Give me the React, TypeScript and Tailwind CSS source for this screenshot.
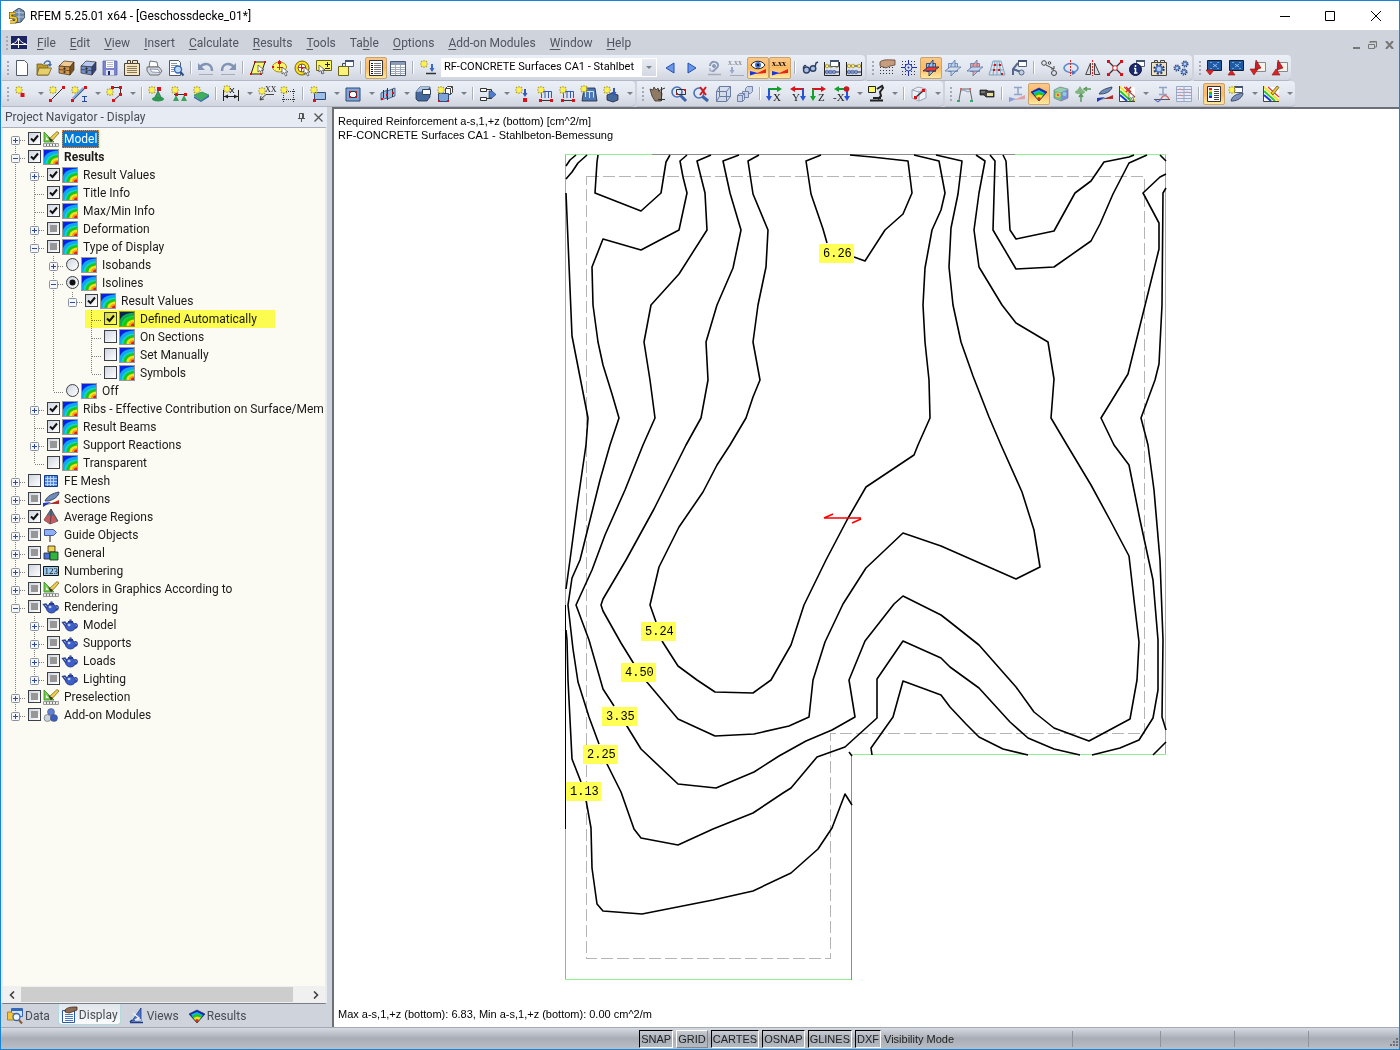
import { useState } from "react";
import type { ReactNode } from "react";
import clsx from "clsx";

/* ---------- small parts shared by the icons ---------- */

const Star = ({ x = 4, y = 4 }: { x?: number; y?: number }) => (
  <g transform={`translate(${x} ${y})`}>
    <path d="M0-4V4M-4 0H4M-3-3 3 3M3-3-3 3" stroke="#b9a514" strokeWidth="1.2" />
    <circle r="2.4" fill="#fff34a" />
  </g>
);

const Dot = ({ x, y, s = 3 }: { x: number; y: number; s?: number }) => (
  <rect x={x - s / 2} y={y - s / 2} width={s} height={s} fill="#dd1018" />
);

const Cursor = ({ x, y }: { x: number; y: number }) => (
  <path transform={`translate(${x} ${y})`} d="M0 0V7L2 5.5 3.5 9 5 8.2 3.5 5H6Z" fill="#fff" stroke="#444" strokeWidth=".7" />
);

const Win = ({ x, y }: { x: number; y: number }) => (
  <g>
    <path d={`M${x + 0.5} ${y + 0.5}h8v6h-8Z`} fill="#fff" stroke="#555f78" />
    <path d={`M${x} ${y + 1}h9`} stroke="#46536f" strokeWidth="2" />
  </g>
);

const Gear = ({ x, y, r, c = "#4a74bd" }: { x: number; y: number; r: number; c?: string }) => (
  <g transform={`translate(${x} ${y})`}>
    <circle r={r} fill="none" stroke="#22386b" strokeWidth={r * 0.7} strokeDasharray={`${r * 0.42} ${r * 0.37}`} />
    <circle r={r * 0.72} fill="#b9cdf0" stroke={c} strokeWidth={r * 0.4} />
  </g>
);

const Axis = ({ v, h, c1, c2, flip }: { v: string; h: string; c1: string; c2: string; flip?: boolean }) => (
  <g>
    {flip ? (
      <g>
        <path d="M15 3H5" stroke={c1} strokeWidth="2" />
        <path d="M6 0v6L1 3Z" fill={c1} />
        <path d="M14 3v8" stroke={c2} strokeWidth="2" />
        <path d="M11 10h6l-3 5Z" fill={c2} />
      </g>
    ) : (
      <g>
        <path d="M1 3h9" stroke={c1} strokeWidth="2" />
        <path d="M10 0v6l5-3Z" fill={c1} />
        <path d="M2 3v8" stroke={c2} strokeWidth="2" />
        <path d="M-1 10h6l-3 5Z" fill={c2} />
      </g>
    )}
    <text x={h} y="15" fontSize="11" fontFamily="Liberation Serif, serif" fill="#222">{v}</text>
  </g>
);

const Rainbow = () => (
  <g>
    <path d="M0 6 8 2l8 4-8 9Z" fill="#1523c8" />
    <path d="M2 6.500 8 4l6 3-6 8Z" fill="#0fb9d8" />
    <path d="M3 8 8 6l5 2-5 7Z" fill="#1ec51e" />
    <path d="M4.500 10 8 8.500l4 1L8 15Z" fill="#f2e11c" />
    <path d="M6 12l2-1 2 1-2 3Z" fill="#e3261b" />
    <path d="M0 6 8 2l8 4-8 9Z" fill="none" stroke="#223" strokeWidth=".6" />
  </g>
);

const Stripes = () => (
  <g>
    <path d="M1 1h15v14H1Z" fill="#fff" />
    <path d="M1 1 16 15" stroke="#f5e31d" strokeWidth="2" />
    <path d="M1 5 12 15" stroke="#27c82a" strokeWidth="2" />
    <path d="M1 9 8 15" stroke="#1b35de" strokeWidth="2" />
    <path d="M5 1 16 11" stroke="#e33" strokeWidth="1.200" />
    <path d="M.500 0V15.500H16" fill="none" stroke="#444" />
  </g>
);

const Blade = () => (
  <path d="M2 10C4 5 10 2 16 1c0 4-5 8-11 9Z" fill="#6f8bb8" stroke="#26334d" strokeWidth=".8" />
);

const RedBlue = () => (
  <g>
    <path d="M0 16v-4l8-1Z" fill="#1b35de" />
    <path d="M7 13 16 9v4Z" fill="#e3261b" />
    <path d="M0 14 16 11" stroke="#444" strokeWidth=".7" />
  </g>
);

const Beads = () => (
  <g>
    <path d="M.500 2v13.500h15V2M0 6h16M0 12h16" fill="none" stroke="#222" />
    <g fill="#fbe868" stroke="#7a6a12" strokeWidth=".5">
      <circle cx="3" cy="6" r="1.800" /><circle cx="7" cy="6" r="1.800" /><circle cx="13" cy="6" r="1.800" />
    </g>
    <g fill="#7a97d8" stroke="#2a3d78" strokeWidth=".5">
      <circle cx="3" cy="12" r="1.800" /><circle cx="6.500" cy="12" r="1.800" /><circle cx="10" cy="12" r="1.800" />
    </g>
  </g>
);

const Planes = ({ a, b, line }: { a: string; b: string; line: string }) => (
  <g stroke={line} strokeWidth=".8">
    <path d="M3.500 3.500h9v8h-9Z" fill={a} />
    <path d="M6 5 10 0v12l-4 4Z" fill={a} fillOpacity=".85" />
    <path d="M0 11 5 7h11l-5 4Z" fill={b} />
  </g>
);

const DotGrid = () => (
  <path d="M1 7.500H16M1 10.500H16M1 13.500H16" stroke="#333" strokeDasharray="1 2" />
);

const Loads = () => (
  <g>
    <path d="M4.500 12V5.500h10V12M8 6v6M11.500 6v6" fill="none" stroke="#3557b8" />
    <path d="M2 14.500h14" stroke="#333" />
    <Dot x={3.5} y={14.5} /><Dot x={14.5} y={14.5} />
  </g>
);

const Drawer = ({ a, b, c }: { a: string; b: string; c: string }) => (
  <g stroke="#3b3020" strokeWidth=".7">
    <path d="M1 6 6 1l10 1-4 5Z" fill={b} />
    <path d="M1 6l11 1v8L1 13Z" fill={a} />
    <path d="M12 7l4-5v8l-4 5Z" fill={c} />
    <path d="M1 9.500l11 1.200" />
    <circle cx="6.500" cy="8.500" r=".8" fill="#222" /><circle cx="6.500" cy="12" r=".8" fill="#222" />
  </g>
);

/* ---------- toolbar icons on a 16 x 16 grid ---------- */

const ICONS: Record<string, ReactNode> = {
  blank: <path d="M2.500 .500h8l3 3v12h-11Z" fill="#fff" stroke="#525b6b" />,
  open: (
    <g>
      <path d="M1 4h5l1 1h5v10H1Z" fill="#b99a33" stroke="#6e5a15" strokeWidth=".8" />
      <path d="M3 8h12.500l-3 7H1Z" fill="#e8cf6d" stroke="#6e5a15" strokeWidth=".8" />
      <path d="M8 4c1-3 4-4 6-2v3" fill="none" stroke="#456ea8" strokeWidth="1.500" />
      <path d="M11.500 4h4.500l-2 3Z" fill="#456ea8" />
    </g>
  ),
  drawer: <Drawer a="#d6964c" b="#f2c990" c="#7d5220" />,
  drawerBlue: <Drawer a="#6f8fd8" b="#b5c8f2" c="#30457f" />,
  save: (
    <g>
      <path d="M1 1h14v14H1Z" fill="#7a83cc" stroke="#5d64a8" strokeWidth=".8" />
      <path d="M4 1h8v7H4Z" fill="#fff" />
      <path d="M5 2.500h6M5 4.500h6M5 6.500h6" stroke="#b3bad8" />
      <path d="M4 10h8v5H4Z" fill="#e1e4f5" />
      <path d="M6 11h2v4H6Z" fill="#222c66" />
    </g>
  ),
  report: (
    <g>
      <path d="M.500 3.500h15v12H.500Z" fill="#f5e4c3" stroke="#494337" />
      <path d="M3.500 .500h3v3h-3ZM8.500 .500h5v3h-5Z" fill="#f5e4c3" stroke="#494337" />
      <path d="M3 6.500h10M3 8.500h10M3 10.500h10M3 12.500h10" stroke="#8c7a55" />
    </g>
  ),
  print: (
    <g strokeWidth=".8" stroke="#555">
      <path d="M3 7 4 1l7 1 1 5Z" fill="#fff" />
      <path d="M1 7l12 0 3 4-3 4H4L1 11Z" fill="#d5d8df" />
      <path d="M4 9l8 .500 2 3-8-.500Z" fill="#fff" stroke="#7788aa" />
    </g>
  ),
  preview: (
    <g>
      <path d="M1.500 .500h9l2 2v13h-11Z" fill="#fff" stroke="#525b6b" />
      <path d="M3 3.500h6M3 5.500h7M3 7.500h4M3 9.500h4M3 11.500h3" stroke="#8a94a8" />
      <circle cx="10" cy="9.500" r="3.500" fill="#bddcfb" stroke="#3a67b5" strokeWidth="1.400" />
      <path d="M12.500 12l3 3.500" stroke="#2b4d90" strokeWidth="2" />
    </g>
  ),
  undo: (
    <g fill="none" stroke="#8294b5">
      <path d="M2 7c4-5 12-4 12 4" strokeWidth="2.500" />
      <path d="M0 3v7h7Z" fill="#8294b5" stroke="none" />
      <path d="M1 14.500h14" stroke="#a7adba" />
    </g>
  ),
  redo: (
    <g fill="none" stroke="#8294b5">
      <path d="M14 7C10 2 2 3 2 11" strokeWidth="2.500" />
      <path d="M16 3v7H9Z" fill="#8294b5" stroke="none" />
      <path d="M1 14.500h14" stroke="#a7adba" />
    </g>
  ),
  selRhomb: (
    <g>
      <path d="M5 2h10L11 14H1Z" fill="#fbf56a" stroke="#222" />
      <Dot x={5} y={2} s={2} /><Dot x={15} y={2} s={2} /><Dot x={1} y={14} s={2} /><Dot x={11} y={14} s={2} />
      <Cursor x={8} y={5} />
    </g>
  ),
  selEllipse: (
    <g>
      <ellipse cx="7.500" cy="7" rx="7" ry="5" fill="#fbf56a" stroke="#a59018" />
      <path d="M7.500 0v10M5 7.500h6" stroke="#d22" />
      <Dot x={7.5} y={2.5} /><Dot x={1} y={7} s={2} />
      <Cursor x={10} y={7} />
    </g>
  ),
  selRing: (
    <g>
      <circle cx="8" cy="8" r="7" fill="#fbe021" stroke="#7a6508" />
      <circle cx="8" cy="8" r="4" fill="#fff" stroke="#7a6508" />
      <path d="M7.500 4v8M4 7.500h8" stroke="#d22" />
      <Dot x={8} y={8} s={2} />
      <Cursor x={10} y={7} />
    </g>
  ),
  selNote: (
    <g>
      <path d="M.500 .500h15v10h-8l-2 3v-3h-5Z" fill="#fbf56a" stroke="#6d661a" />
      <path d="M9 4.500h5M11.500 2v5M9 8.500h5" stroke="#222" />
      <Cursor x={3} y={5} />
    </g>
  ),
  copyWin: (
    <g>
      <path d="M.500 6.500h10v9H.500Z" fill="#fbf07a" stroke="#6d661a" />
      <path d="M4.500 6V3.500h3" fill="none" stroke="#445" />
      <Win x={7} y={0} />
    </g>
  ),
  list: (
    <g>
      <path d="M1.500 .500h13v15h-13Z" fill="#fff" stroke="#333" />
      <path d="M6 3.500h7M6 5.500h7M6 7.500h7M6 9.500h7M6 11.500h7M6 13.500h7" stroke="#777" />
      <path d="M3 3.500h2M3 5.500h2M3 7.500h2M3 9.500h2M3 11.500h2M3 13.500h2" stroke="#111" />
    </g>
  ),
  table: (
    <g>
      <path d="M.500 1.500h15v14H.500Z" fill="#fff" stroke="#4a566e" />
      <path d="M1 3.500h14" stroke="#8a9bb8" strokeWidth="3" />
      <path d="M1 7.500h14M1 9.500h14M1 11.500h14M1 13.500h14M5.500 5v10M10.500 5v10" stroke="#a3acbc" />
    </g>
  ),
  starDown: (
    <g>
      <Star />
      <path d="M12 4v7" stroke="#3d66c8" strokeWidth="2" />
      <path d="M9.500 8h5L12 12Z" fill="#3d66c8" />
      <path d="M6 13.500h10" stroke="#333" strokeWidth="1.500" />
    </g>
  ),
  prev: <path d="M12 3v10L4 8Z" fill="#6b97ec" stroke="#2450a8" />,
  next: <path d="M4 3v10l8-5Z" fill="#6b97ec" stroke="#2450a8" />,
  lamp: (
    <g stroke="#8b99b8" fill="none">
      <path d="M4 6c0-6 9-5 8 0-1 3-4 3-5 6" strokeWidth="2" />
      <circle cx="8" cy="6" r="1.500" fill="#8b99b8" />
      <path d="M2 14.500h13" stroke="#a5abb8" strokeWidth="1.500" />
      <path d="M4 8v3h3" />
    </g>
  ),
  xxxDown: (
    <g>
      <text x="0" y="5" fontSize="8" fontFamily="Liberation Serif, serif" fill="#777">x.xx</text>
      <path d="M4 7v5" stroke="#98a8cc" strokeWidth="2" />
      <path d="M1.500 10h5L4 14Z" fill="#98a8cc" />
      <path d="M2 15.500h14" stroke="#a5abb8" />
    </g>
  ),
  eye: (
    <g>
      <path d="M1 5c3-5 11-5 14 0-3 5-11 5-14 0Z" fill="#fff" stroke="#222" />
      <circle cx="8" cy="5" r="3" fill="#3d6fd0" /><circle cx="8" cy="5" r="1.200" fill="#111" />
      <path d="M5 14 16 9v4Z" fill="#e3261b" />
      <path d="M0 15.500V11l8 2Z" fill="#1b35de" />
    </g>
  ),
  xxx: (
    <g>
      <text x="0" y="6" fontSize="8" fontWeight="bold" fontFamily="Liberation Serif, serif" fill="#111">x.xx</text>
      <path d="M5 14 16 9v4Z" fill="#e3261b" />
      <path d="M0 15.500V11l8 2Z" fill="#1b35de" />
    </g>
  ),
  glasses: (
    <g fill="#a9bfe6" stroke="#2e4065" strokeWidth="1.400">
      <circle cx="4.500" cy="10" r="3" /><circle cx="11" cy="8.500" r="2.800" />
      <path d="M1.500 9C1 6 3 5 4 6M13 7l1-4 2-1" fill="none" />
    </g>
  ),
  abacusWin: <g><Beads /><Win x={6} y={0} /></g>,
  abacus: <Beads />,
  handGrid: (
    <g>
      <DotGrid />
      <path d="M1 2C4-1 10 0 16 0v5l-5 1-4 2-6-2Z" fill="#c69c7e" stroke="#5d4030" strokeWidth=".8" />
    </g>
  ),
  snapGrid: (
    <g>
      <path d="M1 1.500H16M1 4.500H16M1 11.500H16M1 14.500H16" stroke="#333" strokeDasharray="1 2" />
      <path d="M7.500 0v16M0 7.500h16" stroke="#1d2fa8" />
      <circle cx="7.500" cy="7.500" r="3.500" fill="#dfe6f6" stroke="#1d2fa8" />
      <circle cx="7.500" cy="7.500" r="1" fill="#1d2fa8" />
    </g>
  ),
  planes: <Planes a="#8ec4f5" b="#ee3a2e" line="#16305c" />,
  planesBlue: <Planes a="#bcd3ee" b="#d9dfea" line="#5c7aa8" />,
  planesRed: <Planes a="#f09a98" b="#c4d4ec" line="#5c7aa8" />,
  gridRed: (
    <g>
      <path d="M4 1h8l4 14H0ZM3 5h10M2 10h12M8 1v14M6 1 4 15M10 1l2 14" fill="none" stroke="#7fa5c0" />
      <Dot x={6} y={5} s={2} /><Dot x={11} y={5} s={2} /><Dot x={5} y={10} s={2} /><Dot x={10} y={10} s={2} /><Dot x={13} y={14} s={2} />
    </g>
  ),
  robot: (
    <g>
      <path d="M2 15V9l5-6M2 9l8 3" fill="none" stroke="#54658c" strokeWidth="2" />
      <circle cx="10.500" cy="12.500" r="2.500" fill="#c2cde2" stroke="#54658c" />
      <Win x={7} y={0} />
    </g>
  ),
  moveCopy: (
    <g fill="none" stroke="#444">
      <circle cx="3" cy="3" r="2.300" /><circle cx="8.500" cy="3" r="1.300" /><circle cx="13" cy="13" r="2.500" />
      <path d="M5 5l8 4M13 9V6M13 9h-3" />
    </g>
  ),
  rotate: (
    <g>
      <ellipse cx="8" cy="8" rx="7" ry="4.500" fill="none" stroke="#5b8ad0" strokeWidth="1.600" />
      <path d="M7.500 0v16" stroke="#d22" strokeDasharray="2 1" />
      <path d="M9 10v5l4-2Z" fill="#4a78c4" />
    </g>
  ),
  mirror: (
    <g fill="#d7dbe2" stroke="#444">
      <path d="M5.500 3v11.500H.700Z" /><path d="M9.500 3v11.500h5.300Z" />
      <path d="M7.500 0v16" stroke="#d22" strokeDasharray="2 1" />
    </g>
  ),
  explode: (
    <g>
      <path d="M1 1l14 14M15 1 1 15" stroke="#333" strokeWidth="1.400" />
      <circle cx="8" cy="8" r="2.300" fill="#fff" stroke="#d22" />
      <Dot x={1.5} y={1.5} /><Dot x={14.5} y={1.5} /><Dot x={1.5} y={14.5} /><Dot x={14.5} y={14.5} />
    </g>
  ),
  info: (
    <g>
      <Win x={7} y={0} />
      <circle cx="6.500" cy="9.500" r="6" fill="#1a2a6e" stroke="#0c1540" />
      <path d="M6.500 5v2M6.500 8v5M5 13h3.500M5 8.500h1.500" stroke="#fff" strokeWidth="1.500" />
    </g>
  ),
  calGear: (
    <g>
      <path d="M.500 2.500h15v13H.500Z" fill="#f0e2c4" stroke="#444" />
      <path d="M3.500 .500h3v2h-3ZM9.500 .500h4v2h-4Z" fill="#f0e2c4" stroke="#444" />
      <Gear x={8} y={9} r={4.2} />
    </g>
  ),
  gears: <g><Gear x={4} y={8} r={2.6} /><Gear x={12} y={4} r={2.6} /><Gear x={11} y={12} r={2.6} /></g>,
  screenDown: (
    <g>
      <path d="M1.500 .500h14v10h-14Z" fill="#2159a3" stroke="#123" />
      <path d="M7 4l4 3M11 4 7 7" stroke="#9cd4ff" strokeWidth=".8" />
      <path d="M4 2.500h2M11 2.500h2M4 8.500h2M11 8.500h2" stroke="#5fa5e0" />
      <path d="M0 10h8l-4 5Z" fill="#dd2222" stroke="#811" strokeWidth=".6" />
    </g>
  ),
  screenUp: (
    <g>
      <path d="M1.500 .500h14v10h-14Z" fill="#2159a3" stroke="#123" />
      <path d="M7 4l4 3M11 4 7 7" stroke="#9cd4ff" strokeWidth=".8" />
      <path d="M4 2.500h2M11 2.500h2M4 8.500h2M11 8.500h2" stroke="#5fa5e0" />
      <path d="M0 15h7L3.500 10Z" fill="#dd2222" stroke="#811" strokeWidth=".6" />
    </g>
  ),
  wedgeDown: (
    <g>
      <path d="M5.500 2.500h10v9h-10Z" fill="#f5f3e9" stroke="#888" />
      <path d="M6 0l5 8-6 2Z" fill="#c9202b" stroke="#711" strokeWidth=".6" />
      <path d="M0 9h8l-4 6Z" fill="#dd2222" stroke="#811" strokeWidth=".6" />
    </g>
  ),
  wedgeUp: (
    <g>
      <path d="M5.500 2.500h10v9h-10Z" fill="#f5f3e9" stroke="#888" />
      <path d="M6 0l5 8-6 2Z" fill="#c9202b" stroke="#711" strokeWidth=".6" />
      <path d="M0 15h8L4 9Z" fill="#dd2222" stroke="#811" strokeWidth=".6" />
    </g>
  ),

  /* second row */
  node: <g><Star x={5} y={4} /><Dot x={8.5} y={9} s={4} /></g>,
  line: <g><path d="M2 14 14 2" stroke="#333" /><Star /><Dot x={1.5} y={14.5} /><Dot x={14.5} y={1.5} /></g>,
  member: (
    <g>
      <path d="M2 13 13 2" stroke="#7ea5d8" strokeWidth="3" />
      <path d="M2 14 14 2" stroke="#335" strokeWidth=".7" />
      <Star /><Dot x={1.5} y={14.5} /><Dot x={14.5} y={1.5} />
      <path d="M11 10.500h5M13.500 10v5M11 15.500h5" stroke="#2545a0" />
    </g>
  ),
  poly: (
    <g>
      <path d="M6.500 1.500h8v7L8 14" fill="none" stroke="#333" />
      <Star x={4} y={6} />
      <Dot x={6.5} y={1.5} /><Dot x={14.5} y={1.5} /><Dot x={14.5} y={8.5} /><Dot x={7.5} y={14.5} />
    </g>
  ),
  support: (
    <g>
      <path d="M9 5l4 8H5Z" fill="#35a35a" stroke="#145" strokeWidth=".6" />
      <ellipse cx="9" cy="13" rx="6" ry="2.600" fill="#2f9650" />
      <Star x={3} y={4} /><Dot x={10} y={3} s={4} />
    </g>
  ),
  support2: (
    <g>
      <path d="M3 8.500h13" stroke="#333" />
      <path d="M5 9l3 6H2ZM13 9l3 6h-6Z" fill="#35a35a" />
      <Dot x={5.5} y={8.5} /><Dot x={14.5} y={8.5} /><Star x={4} y={4} />
    </g>
  ),
  surface: (
    <g>
      <path d="M1 9 9 6l7 3-8 6Z" fill="#3fae62" stroke="#174" strokeWidth=".6" />
      <path d="M1 10l7 5 8-6v2l-8 5-7-4Z" fill="#3767b6" />
      <Star />
    </g>
  ),
  dim: (
    <g>
      <path d="M.500 4v11M15.500 4v11M1 10.500h14" stroke="#222" />
      <path d="M1 10.500l4-2v4ZM15 10.500l-4-2v4Z" fill="#222" />
      <Star x={4} y={3} />
      <path d="M7 2l4 5M11 2 7 7" stroke="#222" />
    </g>
  ),
  textXX: (
    <g>
      <Star x={4} y={5} />
      <text x="7" y="6" fontSize="8" fontFamily="Liberation Serif, serif" fill="#222">XX</text>
      <path d="M2 14 8 8.500h8M2 14l1-4M2 14l4-1" fill="none" stroke="#444" />
    </g>
  ),
  frameDots: (
    <g>
      <path d="M3.500 3v13M13.500 3v13M2 5.500h14M2 13.500h14" fill="none" stroke="#333" strokeDasharray="1 1" />
      <Star />
    </g>
  ),
  rectStar: (
    <g>
      <path d="M4.500 6.500h11v7h-11Z" fill="#9dbfe6" stroke="#2f4a78" />
      <Star /><Dot x={4.5} y={14.5} />
    </g>
  ),
  opening: (
    <g>
      <path d="M1 2h14v13H1Z" fill="#7ea5d8" stroke="#2f4a78" />
      <path d="M4.500 5.500h7v6h-7Z" fill="#fff" stroke="#333" />
      <Dot x={5} y={6} s={2} /><Dot x={11} y={6} s={2} /><Dot x={5} y={11} s={2} /><Dot x={11} y={11} s={2} />
    </g>
  ),
  joints: (
    <g>
      <path d="M1 7 7 4v8l-6 2ZM7 5l8-3v8l-8 3Z" fill="#9fc0e4" stroke="#35507c" strokeWidth=".8" />
      <path d="M7.500 2v12M3.500 4v8M12.500 3v8" stroke="#333" />
      <Dot x={2} y={13} s={2} /><Dot x={7} y={9} s={2} /><Dot x={13} y={7} s={2} />
    </g>
  ),
  solid: (
    <g>
      <path d="M1 6l4-5h10v10l-3 4H3l-2-2Z" fill="#44699c" stroke="#22344f" strokeWidth=".8" />
      <path d="M1 6l4-5h10l-4 4Z" fill="#a9c3e4" />
      <path d="M7.500 3.500h8v5h-8Z" fill="#fff" stroke="#345" />
    </g>
  ),
  solids: (
    <g>
      <path d="M8.500 2.500l2-2h5v6l-2 2h-5ZM8.500 2.500h5v6M13.500 2.500l2-2" fill="#fff" stroke="#444" />
      <path d="M1.500 7.500h10v8h-10Z" fill="#7ea5d8" stroke="#2f4a78" />
      <Star /><Dot x={2} y={15} s={2} /><Dot x={11} y={15} s={2} />
    </g>
  ),
  flow: (
    <g>
      <path d="M.500 2.500h6v3h-6ZM.500 11.500h6v3h-6Z" fill="#fff" stroke="#333" />
      <path d="M7 3.500h4.500v3M7 12.500h4.500V10" fill="none" stroke="#333" />
      <path d="M9 5h3l4 3.500-4 3.500H9Z" fill="#4c7bd0" stroke="#234" strokeWidth=".6" />
    </g>
  ),
  load1: (
    <g>
      <Star x={4} y={4} />
      <path d="M10 3v5" stroke="#3557b8" strokeWidth="2" /><path d="M7.500 7h5L10 11Z" fill="#3557b8" /><Dot x={10} y={14} s={4} />
    </g>
  ),
  load2: <g><Loads /><Star /></g>,
  load4: <g><path d="M3 2h11l2 13H1Z" fill="#4c78b8" stroke="#223" strokeWidth=".8" /><path d="M4.500 5.500h8v6M8.500 5v7M4.500 5v6" fill="none" stroke="#cfe2fa" /><Star x={3} y={3} /></g>,
  load5: (
    <g>
      <path d="M4 9l5-2 6 2v5l-5 2-6-2Z" fill="#44699c" stroke="#223" strokeWidth=".8" />
      <path d="M11 2v5" stroke="#3557b8" strokeWidth="2" /><path d="M8.500 6h5L11 10Z" fill="#3557b8" />
      <Star />
    </g>
  ),
  hand: (
    <g>
      <path d="M1 3l3 1 1-3 2 3 2-2 1 3 3 2-1 8H6L3 10Z" fill="#8f7a66" stroke="#3d3026" strokeWidth=".8" />
      <path d="M12.500 1v14M9 5l7-3M9 13.500h7" stroke="#333" />
    </g>
  ),
  zoomWin: (
    <g>
      <circle cx="6" cy="6" r="5" fill="#dcebfb" stroke="#4a70b8" strokeWidth="1.600" />
      <path d="M9.500 9.500 15 15" stroke="#3a62ad" strokeWidth="3" />
      <path d="M5.500 3.500h9v5h-9Z" fill="none" stroke="#333" /><Dot x={6} y={8} s={2} /><Dot x={14} y={4} s={2} />
    </g>
  ),
  zoomX: (
    <g>
      <circle cx="6" cy="7" r="5" fill="#dcebfb" stroke="#4a70b8" strokeWidth="1.600" />
      <path d="M9.500 10.500 15 15" stroke="#3a62ad" strokeWidth="3" />
      <path d="M7 1l6 8M13 1 7 9" stroke="#d8141c" strokeWidth="2" />
    </g>
  ),
  cubeWire: <path d="M1.500 5.500h10v10h-10ZM1.500 5.500l3-5h11v10l-4 5M11.500 5.500l4-5M4.500 .500v10M4.500 10.500h11M4.500 10.500l-3 5" fill="#ccd6ea" fillOpacity=".6" stroke="#6a7aa0" />,
  cubes3: (
    <g fill="#c8d3ea" stroke="#6a7aa0" strokeWidth=".9">
      <path d="M8.500 2.500l2-2h5v5l-2 2h-5Z" /><path d="M5.500 5.500h6v6h-6Z" /><path d="M.500 9.500l2-2h5v6l-2 2H.500Z" />
      <path d="M.500 9.500h5v6M5.500 9.500l2-2" fill="none" />
    </g>
  ),
  axX: <Axis v="X" h="6" c1="#12a12a" c2="#2753d6" />,
  axY: <Axis v="Y" h="3" c1="#d8141c" c2="#2753d6" flip />,
  axZ: <Axis v="Z" h="7" c1="#d8141c" c2="#12a12a" />,
  axMinusX: <g><Axis v="-X" h="0" c1="#12a12a" c2="#2753d6" flip /><circle cx="13.500" cy="3" r="2.800" fill="#c81a22" /></g>,
  scope: (
    <g>
      <path d="M9 3l5-3 1 2-3 4 1 4-3 3M2 14.500h13M5 12h8" fill="none" stroke="#222" strokeWidth="2" />
      <path d="M.500 .500h7v6h-7Z" fill="#fdf86a" stroke="#222" />
    </g>
  ),
  cubeLine: (
    <g>
      <path d="M1 4l6-3 8 2v9l-7 3-7-3ZM1 4l7 2 7-3M8 6v9" fill="#eef1f7" stroke="#9aa3b5" />
      <path d="M5 11 12 5" stroke="#333" strokeWidth="1.500" /><Dot x={4.5} y={11.5} /><Dot x={12.5} y={4.5} />
    </g>
  ),
  portal: (
    <g>
      <path d="M2 14 4 3h9l2 11" fill="none" stroke="#666" />
      <path d="M4 5c4-3 6 3 9 0" fill="none" stroke="#7f8fb5" />
      <path d="M3 3h2M12 3h2" stroke="#d66" strokeWidth="2" /><path d="M0 15h3M13 15h3" stroke="#3a6" strokeWidth="2" />
    </g>
  ),
  torch: (
    <g>
      <path d="M1 4h7l1 1h6v6H7L5 9H1Z" fill="#444" stroke="#111" strokeWidth=".7" />
      <path d="M8 7h6v3H8Z" fill="#e8e0a0" /><path d="M2 6h4" stroke="#aaa" />
    </g>
  ),
  beam: (
    <g>
      <path d="M5 1.500h8M9 1.500v7M5 8.500h8" stroke="#8fa3c8" strokeWidth="1.500" />
      <path d="M5 14 16 9v4Z" fill="#dda2a8" /><path d="M0 11v5l7-3Z" fill="#8a9bd8" />
    </g>
  ),
  rainbow: <Rainbow />,
  cubeColor: (
    <g>
      <path d="M1 4l7 2v9l-7-3Z" fill="#6fc28a" /><path d="M8 6l7-3v9l-7 3Z" fill="#7c8fd8" /><path d="M1 4l6-3 8 2-7 3Z" fill="#8fd0a8" />
      <circle cx="5" cy="9" r="2.500" fill="#e7c94e" /><circle cx="5" cy="9" r="1.200" fill="#df5b3c" /><circle cx="11.500" cy="8" r="2" fill="#8fd0d8" />
      <path d="M1 4l6-3 8 2v9l-7 3-7-3Z" fill="none" stroke="#778" strokeWidth=".7" />
    </g>
  ),
  supGreen: (
    <g fill="#83b583">
      <path d="M5 0l4 6H1Z" /><ellipse cx="5" cy="6" rx="5" ry="2" />
      <path d="M6 16V9M4 11l2-3 2 3M16 3h-5M12 1 9 3l3 2" stroke="#5d9a5d" strokeWidth="1.500" />
    </g>
  ),
  blades: <g><path d="M2 8C4 4 10 2 15 1c0 3-5 7-11 7Z" fill="#6f8bb8" stroke="#26334d" strokeWidth=".8" /><RedBlue /></g>,
  stripesX: <g><Stripes /><path d="M7 1l5 5M12 1 7 6" stroke="#b33" strokeWidth="1.500" /><Cursor x={10} y={6} /></g>,
  beamCurve: (
    <g fill="none">
      <path d="M5 1.500h8M9 1.500v7M5 8.500h8" stroke="#8fa3c8" strokeWidth="1.500" />
      <path d="M0 13.500h16" stroke="#555" /><path d="M1 13c2 4 4 3 6 0" stroke="#4d66d8" strokeWidth="1.300" /><path d="M7 13c2-5 6-4 8 0" stroke="#d66" strokeWidth="1.300" />
    </g>
  ),
  tableBlue: (
    <g>
      <path d="M.500 .500h15v15H.500ZM8 1v14M1 3.500h14M1 6.500h14M1 9.500h14M1 12.500h14" fill="#e6ebf7" stroke="#9aa8c8" />
      <path d="M2 4c2-2 4 0 5 0M9 7c2-2 4 0 5 0M2 10c2-2 4 0 5 0" fill="none" stroke="#d88" />
    </g>
  ),
  legend: (
    <g>
      <path d="M1.500 .500h13v15h-13Z" fill="#fff" stroke="#333" />
      <path d="M3 3h3" stroke="#d22" strokeWidth="2" /><path d="M3 5h3" stroke="#f5d31d" strokeWidth="2" /><path d="M3 7h3" stroke="#2b2" strokeWidth="2" />
      <path d="M3 9h3" stroke="#1bd" strokeWidth="2" /><path d="M3 11h3" stroke="#22d" strokeWidth="2" />
      <path d="M8 3.500h5M8 5.500h5M8 7.500h5M8 9.500h5M8 11.500h5M8 13.500h5" stroke="#444" />
    </g>
  ),
  starBlade: <g><path d="M3 15C4 10 8 8 15 7c0 4-5 8-11 8Z" fill="#7d93bb" stroke="#26334d" strokeWidth=".8" /><Win x={6} y={0} /><Star /></g>,
  stripesPen: <g><Stripes /><path d="M8 7 14 0l2 1.500L10 9Z" fill="#e8c22c" stroke="#543" strokeWidth=".7" /></g>,

  /* navigator */
  iso: (
    <g>
      <path d="M0 0h16v16H0Z" fill="#9a9a9a" />
      <path d="M1 1h14v14H1Z" fill="#0a22e6" />
      <path d="M1 15V9C3 4 8 2 15 1.500V15Z" fill="#12a6f2" />
      <path d="M2.500 15c0-6 5-10 12.500-10.500V15Z" fill="#10d8c8" />
      <path d="M4.500 15c0-5 4-8.500 10.500-9V15Z" fill="#1ec51e" />
      <path d="M7.500 15c0-4 3-6 7.500-6.500V15Z" fill="#f2e11c" />
      <path d="M10 15c0-2.500 2-4 5-4v4Z" fill="#f59a1c" />
      <path d="M12 15c0-1.500 1-2.500 3-2.500V15Z" fill="#d9201b" />
    </g>
  ),
  ruler: (
    <g>
      <path d="M1 1v10h10Z" fill="#6fd04e" stroke="#2d8a1d" strokeWidth=".8" />
      <path d="M3 6v3h3Z" fill="#fcfbf3" />
      <path d="M6 8l2 3 8-9-2-1.500Z" fill="#f0cf45" stroke="#6b5418" strokeWidth=".7" />
      <path d="M5 6l3 5 2-2Z" fill="#333" />
      <path d="M.500 12.500h15v3H.500Z" fill="#eee" stroke="#999" /><path d="M3.500 13v2M6.500 13v2M9.500 13v2M12.500 13v2" stroke="#777" />
    </g>
  ),
  mesh: (
    <g>
      <path d="M1.500 2.500h13v11h-13Z" fill="#4b84da" stroke="#123a8c" />
      <path d="M2 5.500h12M2 8.500h12M2 11.500h12M4.500 3v10M7.500 3v10M10.500 3v10" stroke="#cfe1fb" strokeWidth=".8" />
    </g>
  ),
  sections: <g><Blade /><RedBlue /></g>,
  pyramid: (
    <g>
      <path d="M8 0 1 11l6 4 8-3Z" fill="#5d7186" stroke="#2d3a48" strokeWidth=".7" />
      <path d="M4 6.500h7l3 6-7 2.500-6-4Z" fill="#c9595a" /><path d="M8 0v7l-1 8" stroke="#2d3a48" strokeWidth=".7" fill="none" />
    </g>
  ),
  sign: (
    <g>
      <path d="M6 9h2v6H6Z" fill="#8a8a8a" />
      <path d="M1.500 2.500h9l3 3-3 3h-9Z" fill="#8fb0f2" stroke="#44589a" />
    </g>
  ),
  blocks: (
    <g stroke="#222" strokeWidth=".8">
      <path d="M5 1h7v6H5Z" fill="#f3d24a" /><path d="M1 8h6v6H1Z" fill="#4e6fe0" /><path d="M7 7h8v8H7Z" fill="#2fb53c" />
    </g>
  ),
  numbers: (
    <g>
      <path d="M.500 3.500h15v9H.500Z" fill="#9ccaf0" stroke="#111" />
      <text x="1.500" y="11" fontSize="9" fontFamily="Liberation Serif, serif" fill="#111">123</text>
    </g>
  ),
  teapot: (
    <g>
      <ellipse cx="8.500" cy="9.500" rx="5" ry="4.500" fill="#3f5fc8" stroke="#1b2f7c" strokeWidth=".8" />
      <path d="M4 10 .700 5.500 3 5l3 4M13 7c3-1 3 4-.500 4" fill="none" stroke="#2b459c" strokeWidth="1.500" />
      <path d="M6 5c1-1.500 4-1.500 5 0ZM7.500 3h2" fill="#3f5fc8" stroke="#1b2f7c" />
      <ellipse cx="7" cy="8" rx="1.500" ry="1.200" fill="#bccbf5" />
    </g>
  ),
  balls: (
    <g stroke="#445" strokeWidth=".5">
      <circle cx="8" cy="5" r="3.500" fill="#5f7fd8" /><circle cx="4.500" cy="11" r="3.500" fill="#cdd3dc" /><circle cx="11" cy="11" r="3.500" fill="#3b5cc0" />
    </g>
  ),
  tabData: (
    <g>
      <path d="M4.500 .500h11v8h-11Z" fill="#cfe2fb" stroke="#3567b8" /><path d="M4 2h12" stroke="#3567b8" strokeWidth="2" />
      <path d="M.500 4h4l1 1.500h5V12H.500Z" fill="#f2c636" stroke="#96751a" strokeWidth=".8" />
      <circle cx="9.500" cy="9" r="3.500" fill="#eef6ff" stroke="#3a62ad" strokeWidth="1.300" /><path d="M12 12l3 3.500" stroke="#8a5a2c" strokeWidth="2" />
    </g>
  ),
  tabDisplay: (
    <g>
      <path d="M1.500 3.500h12v12h-12Z" fill="#fff" stroke="#2d57a8" /><path d="M4 7.500h8M4 9.500h8M4 11.500h8M4 13.500h8" stroke="#4575cc" />
      <path d="M4 3c3-3 6-3 12-3v3l-5 2-3 1-4-1Z" fill="#8d6b52" stroke="#402c20" strokeWidth=".8" />
    </g>
  ),
  tabViews: (
    <g>
      <path d="M12 0v13H3Z" fill="#4a74d0" stroke="#1d3a86" strokeWidth=".8" />
      <path d="M4 5l6 5-4 2h6" fill="none" stroke="#eef" strokeWidth="1.500" />
      <path d="M1 14.500h13M3 12l-2 2" stroke="#1d3a86" strokeWidth="1.500" />
    </g>
  ),
};

function Icon({ name }: { name: string }) {
  return (
    <svg viewBox="0 0 16 16" className="size-4 shrink-0 overflow-visible" fill="none" aria-hidden="true">
      {ICONS[name]}
    </svg>
  );
}

/* ---------- toolbars ---------- */

// "|" is a separator, "v" a drop-down arrow, "*" in front marks a pressed button
const FILE_BAR = ["blank", "open", "drawer", "drawerBlue", "save", "report", "print", "preview", "|", "undo", "redo", "|", "selRhomb", "selEllipse", "selRing", "selNote", "copyWin", "|", "*list", "table", "|", "starDown"];
const CASE_BAR = ["prev", "next", "lamp", "xxxDown", "*eye", "*xxx", "|", "glasses", "abacusWin", "abacus"];
const EDIT_BAR = ["handGrid", "snapGrid", "*planes", "planesBlue", "planesRed", "gridRed", "robot", "|", "moveCopy", "rotate", "mirror", "explode", "info", "calGear", "gears"];
const EXPORT_BAR = ["screenDown", "screenUp", "wedgeDown", "wedgeUp"];
const INSERT_BAR = ["node", "v", "line", "member", "v", "poly", "v", "|", "support", "support2", "surface", "|", "dim", "v", "textXX", "frameDots", "|", "rectStar", "v", "opening", "v", "joints", "v", "solid", "solids", "v", "|", "flow", "v", "load1", "load2", "load2", "load4", "load5", "v"];
const VIEW_BAR = ["hand", "zoomWin", "zoomX", "cubeWire", "cubes3", "|", "axX", "axY", "axZ", "axMinusX", "v", "scope", "v", "|", "cubeLine", "v"];
const RESULT_BAR = ["portal", "torch", "|", "beam", "*rainbow", "cubeColor", "supGreen", "blades", "stripesX", "v", "beamCurve", "tableBlue", "|", "*legend", "starBlade", "v", "stripesPen", "v"];

function Grip() {
  return (
    <span className="flex w-[9px] shrink-0 flex-col items-center gap-[2px] pl-[2px]">
      {[0, 1, 2, 3].map((i) => (
        <i key={i} className="block size-[2px] bg-[#a3a9b6]" />
      ))}
    </span>
  );
}

function Tools({ items }: { items: string[] }) {
  return (
    <>
      {items.map((item, i) => {
        if (item === "|") {
          return <span key={i} className="mx-[3px] h-[13px] w-[2px] shrink-0 border-l border-[#a9afbb] bg-white" />;
        }
        if (item === "v") {
          return (
            <button key={i} type="button" aria-label="More" className="flex h-[22px] w-[13px] shrink-0 items-center justify-center pl-[3px]">
              <span className="border-x-3 border-t-3 border-x-transparent border-t-[#7b7f88]" />
            </button>
          );
        }
        const pressed = item[0] === "*";
        const name = pressed ? item.slice(1) : item;
        return (
          <button
            key={i}
            type="button"
            aria-label={name}
            aria-pressed={pressed}
            className={clsx(
              "flex h-[22px] w-[22px] shrink-0 items-center justify-center rounded-xs",
              pressed && "border border-[#c9a36a] bg-linear-to-b from-[#fbc88a] via-[#fdb95f] to-[#ffe9a0]",
            )}
          >
            <Icon name={name} />
          </button>
        );
      })}
    </>
  );
}

function Bar({ children }: { children: ReactNode }) {
  return (
    <div className="mr-[2px] flex h-[26px] shrink-0 items-center rounded-r-sm border-b border-[#b3b8c4] bg-linear-to-b from-[#ebeff7] via-[#e2e7f0] to-[#d0d5df]">
      <Grip />
      {children}
    </div>
  );
}

function CaseSelect() {
  return (
    <span className="mx-[2px] flex h-[19px] w-[216px] shrink-0 items-center bg-white pr-px">
      <select aria-label="Load case" className="w-[200px] min-w-0 appearance-none overflow-hidden pl-[3px] text-[11px] text-black">
        <option>RF-CONCRETE Surfaces CA1 - Stahlbet</option>
      </select>
      <span className="ml-auto grid h-[17px] w-[14px] place-items-center bg-linear-to-b from-[#e8ebf2] to-[#d3d8e2]">
        <i className="border-x-3 border-t-3 border-x-transparent border-t-[#7b7f88]" />
      </span>
    </span>
  );
}

const MENUS = ["File", "Edit", "View", "Insert", "Calculate", "Results", "Tools", "Table", "Options", "Add-on Modules", "Window", "Help"];
// position of the underlined access key
const KEYS: Record<string, number> = { Table: 2 };

function MenuBar() {
  return (
    <nav className="flex h-[25px] shrink-0 items-center text-[#4f545e]">
      <Grip />
      <svg viewBox="0 0 16 13" className="ml-px h-[13px] w-4" aria-hidden="true">
        <path d="M0 0h16v13H0Z" fill="#1c2462" />
        <path d="M0 8.500h16M1 8C5 7 6 5 7.500 2 9 5 11 7 15 8M7.500 2v10" stroke="#fff" fill="none" />
      </svg>
      <div className="flex pt-px pl-[3px]">
        {MENUS.map((m) => {
          const k = KEYS[m] ?? 0;
          return (
            <button key={m} type="button" className="px-[7px]">
              {m.slice(0, k)}
              <span className="underline underline-offset-2">{m[k]}</span>
              {m.slice(k + 1)}
            </button>
          );
        })}
      </div>
      <div className="ml-auto flex items-center gap-2 pt-1 pr-[5px]">
        <button type="button" aria-label="Minimize document">
          <svg viewBox="0 0 8 8" className="size-2"><path d="M1 7h7" stroke="#777" strokeWidth="2" /></svg>
        </button>
        <button type="button" aria-label="Restore document">
          <svg viewBox="0 0 9 8" className="h-2 w-[9px]" fill="none" stroke="#777"><path d="M.500 3.500h6v4h-6ZM2 2V.500h6.500V6H7M2 1h6" /></svg>
        </button>
        <button type="button" aria-label="Close document">
          <svg viewBox="0 0 9 8" className="h-2 w-[9px]" stroke="#777" strokeWidth="2"><path d="M1 0l7 8M8 0 1 8" /></svg>
        </button>
      </div>
    </nav>
  );
}

function TitleBar() {
  return (
    <header className="flex h-[29px] shrink-0 items-center bg-white pl-2 text-black">
      <svg viewBox="0 0 16 16" className="size-4" aria-hidden="true">
        <path d="M4 4 10 0l5 3 1 6-4 5-6 1-3-5Z" fill="#6d87a8" stroke="#3b4d66" />
        <path d="M10 1v13M5 4l10 1M4 9l11 0" stroke="#b8c8dc" />
        <path d="M6.500 5.500h-5v4h3.500a1.800 1.800 0 0 1 0 4.500H1" fill="none" stroke="#5c4a10" strokeWidth="3" />
        <path d="M6.500 5.500h-5v4h3.500a1.800 1.800 0 0 1 0 4.500H1" fill="none" stroke="#f2c833" strokeWidth="1.800" />
      </svg>
      <h1 className="ml-[5px]">RFEM 5.25.01 x64 - [Geschossdecke_01*]</h1>
      <div className="ml-auto flex">
        <button type="button" aria-label="Minimize" className="grid w-[45px] place-items-center">
          <svg viewBox="0 0 10 10" className="size-[10px]" stroke="#000"><path d="M0 5.500h10" /></svg>
        </button>
        <button type="button" aria-label="Maximize" className="grid w-[46px] place-items-center">
          <svg viewBox="0 0 10 10" className="size-[10px]" stroke="#000" fill="none"><path d="M.500 .500h9v9h-9Z" /></svg>
        </button>
        <button type="button" aria-label="Close" className="grid w-[46px] place-items-center">
          <svg viewBox="0 0 10 10" className="size-[10px]" stroke="#000"><path d="M0 0l10 10M10 0 0 10" /></svg>
        </button>
      </div>
    </header>
  );
}

/* ---------- navigator tree ---------- */

type Row = {
  label: string;
  icon: string;
  mark: "on" | "off" | "mixed" | "radio" | "radioOn";
  exp?: "+" | "-";
  // one digit per parent level, 1 where its vertical guide passes the row
  guides?: string;
  last?: boolean;
};

const ROWS: Row[] = [
  { label: "Model", icon: "ruler", mark: "on", exp: "+" },
  { label: "Results", icon: "iso", mark: "on", exp: "-" },
  { label: "Result Values", icon: "iso", mark: "on", exp: "+", guides: "1" },
  { label: "Title Info", icon: "iso", mark: "on", guides: "1" },
  { label: "Max/Min Info", icon: "iso", mark: "on", guides: "1" },
  { label: "Deformation", icon: "iso", mark: "mixed", exp: "+", guides: "1" },
  { label: "Type of Display", icon: "iso", mark: "mixed", exp: "-", guides: "1" },
  { label: "Isobands", icon: "iso", mark: "radio", exp: "+", guides: "11" },
  { label: "Isolines", icon: "iso", mark: "radioOn", exp: "-", guides: "11" },
  { label: "Result Values", icon: "iso", mark: "on", exp: "-", guides: "111", last: true },
  { label: "Defined Automatically", icon: "iso", mark: "on", guides: "1110" },
  { label: "On Sections", icon: "iso", mark: "off", guides: "1110" },
  { label: "Set Manually", icon: "iso", mark: "off", guides: "1110" },
  { label: "Symbols", icon: "iso", mark: "off", guides: "1110", last: true },
  { label: "Off", icon: "iso", mark: "radio", guides: "11", last: true },
  { label: "Ribs - Effective Contribution on Surface/Mem", icon: "iso", mark: "on", exp: "+", guides: "1" },
  { label: "Result Beams", icon: "iso", mark: "on", guides: "1" },
  { label: "Support Reactions", icon: "iso", mark: "mixed", exp: "+", guides: "1" },
  { label: "Transparent", icon: "iso", mark: "off", guides: "1", last: true },
  { label: "FE Mesh", icon: "mesh", mark: "off", exp: "+" },
  { label: "Sections", icon: "sections", mark: "mixed", exp: "+" },
  { label: "Average Regions", icon: "pyramid", mark: "on", exp: "+" },
  { label: "Guide Objects", icon: "sign", mark: "mixed", exp: "+" },
  { label: "General", icon: "blocks", mark: "mixed", exp: "+" },
  { label: "Numbering", icon: "numbers", mark: "off", exp: "+" },
  { label: "Colors in Graphics According to", icon: "ruler", mark: "mixed", exp: "+" },
  { label: "Rendering", icon: "teapot", mark: "mixed", exp: "-" },
  { label: "Model", icon: "teapot", mark: "mixed", exp: "+", guides: "1" },
  { label: "Supports", icon: "teapot", mark: "mixed", exp: "+", guides: "1" },
  { label: "Loads", icon: "teapot", mark: "mixed", exp: "+", guides: "1" },
  { label: "Lighting", icon: "teapot", mark: "mixed", exp: "+", guides: "1", last: true },
  { label: "Preselection", icon: "ruler", mark: "mixed", exp: "+" },
  { label: "Add-on Modules", icon: "balls", mark: "mixed", exp: "+", last: true },
];

function Branch({ row, first }: { row: Row; first: boolean }) {
  const drawing = (
    <svg viewBox="0 0 19 18" className="block h-[18px] w-[19px]" fill="none" aria-hidden="true">
      <path d={clsx(!first && "M9.500 0V10", !row.last && "M9.500 10V18", "M10 10.500H19")} stroke="#808080" strokeDasharray="1 1" />
      {row.exp && (
        <g>
          <rect x="5.500" y="6.500" width="8" height="8" rx="1" fill="#f6f7fb" stroke="#8a919e" />
          <path d={row.exp === "+" ? "M7 10.500h5M9.500 8v5" : "M7 10.500h5"} stroke="#2b4a9b" />
        </g>
      )}
    </svg>
  );
  if (!row.exp) return <span className="shrink-0">{drawing}</span>;
  return (
    <button type="button" aria-label={`Toggle ${row.label}`} aria-expanded={row.exp === "-"} className="shrink-0">
      {drawing}
    </button>
  );
}

function Mark({ mark, id }: { mark: Row["mark"]; id: string }) {
  const radio = mark === "radio" || mark === "radioOn";
  const [on, setOn] = useState(mark === "on" || mark === "radioOn");
  return (
    <span className="grid w-[18px] shrink-0 items-center justify-end pr-[2px] pb-px">
      <input
        id={id}
        type={radio ? "radio" : "checkbox"}
        name={radio ? "display-type" : id}
        checked={on}
        onChange={(e) => setOn(e.target.checked)}
        className={clsx(
          "col-start-1 row-start-1 size-[13px] appearance-none border border-[#3c3f46] bg-linear-to-br from-[#cfd5df] to-white",
          radio && "rounded-full",
        )}
      />
      <svg viewBox="0 0 13 13" className="pointer-events-none col-start-1 row-start-1 size-[13px]" fill="none" aria-hidden="true">
        {!radio && on && <path d="M3 6.500 5.500 9 10 3.500" stroke="#111" strokeWidth="2" />}
        {mark === "mixed" && !on && <path d="M3 3h7v7H3Z" fill="#979797" />}
        {radio && on && <circle cx="6.500" cy="6.500" r="3" fill="#111" />}
      </svg>
    </span>
  );
}

function TreeRow({ row, index }: { row: Row; index: number }) {
  const id = `item-${index}`;
  return (
    <li className="relative flex h-[18px] items-center">
      {(row.guides ?? "").split("").map((g, i) => (
        <svg key={i} viewBox="0 0 19 18" className="h-[18px] w-[19px] shrink-0" aria-hidden="true">
          {g === "1" && <path d="M9.500 0V18" stroke="#808080" strokeDasharray="1 1" />}
        </svg>
      ))}
      <Branch row={row} first={index === 0} />
      <Mark mark={row.mark} id={id} />
      <Icon name={row.icon} />
      <label
        htmlFor={id}
        className={clsx(
          "ml-[3px] px-[2px] leading-[18px] whitespace-nowrap",
          index === 0 && "bg-[#0078d7] text-white outline-1 -outline-offset-1 outline-dotted outline-[#ff8728]",
          index === 1 && "font-bold",
        )}
      >
        {row.label}
      </label>
      {row.label === "Defined Automatically" && (
        <span className="pointer-events-none absolute inset-y-0 left-[79px] w-[190px] bg-[#ffff54] mix-blend-multiply" />
      )}
    </li>
  );
}

const TABS = [
  { label: "Data", icon: "tabData" },
  { label: "Display", icon: "tabDisplay" },
  { label: "Views", icon: "tabViews" },
  { label: "Results", icon: "rainbow" },
];

function Navigator() {
  return (
    <aside className="flex w-[326px] shrink-0 flex-col text-[#1a1a1a]">
      <div className="flex h-[20px] shrink-0 items-center bg-[#e6ebf4] pr-1 pl-1 text-[#474c55]">
        <h2>Project Navigator - Display</h2>
        <button type="button" aria-label="Pin" className="mr-2 ml-auto">
          <svg viewBox="0 0 9 9" className="size-[9px]" fill="none" stroke="#555"><path d="M2.500 5V.500h4V5M5.500 1v4M1 5.500h7M4.500 6v3" /></svg>
        </button>
        <button type="button" aria-label="Close navigator">
          <svg viewBox="0 0 9 9" className="size-[9px]" stroke="#555" strokeWidth="1.300"><path d="M.500 .500l8 8M8.500 .500l-8 8" /></svg>
        </button>
      </div>
      <div className="flex min-h-0 flex-1 flex-col border-x-2 border-y border-x-[#e6ebf4] border-t-[#a9aebb] border-b-[#777b85] bg-[#fcfbf3]">
        <ul className="min-h-0 flex-1 overflow-hidden pt-[2px] pl-[3px]">
          {ROWS.map((row, i) => (
            <TreeRow key={i} row={row} index={i} />
          ))}
        </ul>
        <div className="flex h-[17px] shrink-0 items-center bg-[#f0f0f0]">
          <button type="button" aria-label="Scroll left" className="grid w-[18px] place-items-center">
            <svg viewBox="0 0 6 8" className="h-2 w-[6px]" fill="none" stroke="#404040" strokeWidth="1.600"><path d="M5 .500 1.500 4 5 7.500" /></svg>
          </button>
          <div className="flex h-[15px] flex-1"><span className="w-[95%] bg-[#cdcdcd]" /></div>
          <button type="button" aria-label="Scroll right" className="grid w-[18px] place-items-center">
            <svg viewBox="0 0 6 8" className="h-2 w-[6px]" fill="none" stroke="#404040" strokeWidth="1.600"><path d="M1 .500 4.500 4 1 7.500" /></svg>
          </button>
        </div>
      </div>
      <div className="flex h-[23px] shrink-0 items-start gap-[6px] pl-1 text-[#474c55]">
        {TABS.map((t) => (
          <button
            key={t.label}
            type="button"
            className={clsx(
              "flex h-[21px] items-center gap-[2px] px-[2px] pt-[2px]",
              t.label === "Display" && "rounded-b-sm border border-t-0 border-[#b5d9dc] bg-linear-to-b from-[#dfe5ea] to-[#fafbfb]",
            )}
          >
            <Icon name={t.icon} />
            {t.label}
          </button>
        ))}
      </div>
    </aside>
  );
}

/* ---------- isoline plot ---------- */

const ISOLINES = [
  // 6.26
  "821,155 806,161 811,194 823,229 827,243",
  "854,257 865,261 885,230 903,214 912,193 908,161 872,157 850,155",
  // 5.24
  "759,155 748,161 753,194 768,230 766,267 758,305 753,342 760,380 753,397 746,418 730,445 717,465 703,492 679,527 659,567 650,605 656,622",
  "662,641 678,666 697,680 715,692 753,693 771,680 791,645 804,605 826,560 847,520 866,487 914,455 918,445 930,418 929,380 925,342 923,305 925,268 932,230 941,210 945,193 939,161 914,155",
  // 4.50
  "739,155 723,161 730,193 741,230 733,268 717,305 706,342 708,380 701,418 686,445 678,461 654,509 626,560 603,599 601,605 603,611 621,643 634,664",
  "646,681 678,719 715,736 754,734 789,726 809,717 813,680 825,642 843,604 866,568 903,533 941,546 1016,579 1040,567 1034,530 1022,492 1001,445 989,417 973,376 961,342 953,305 949,267 951,228 958,194 962,161 936,155",
  // 3.35
  "711,155 697,161 705,193 707,230 679,274 651,305 644,342 650,380 655,418 643,445 625,490 605,535 592,570 576,605 589,640 603,689 614,706",
  "625,723 641,749 678,784 716,788 754,772 779,756 806,741 832,730 855,717 849,680 865,641 894,604 903,596 941,615 950,622 979,645 1016,687 1034,712 1054,728 1089,741 1130,719 1137,680 1139,642 1134,600 1129,556 1110,520 1091,485 1067,445 1051,418 1054,379 1048,342 1016,323 1002,305 979,267 974,230 979,193 985,161 979,157 976,155",
  // 2.25
  "687,155 680,161 683,177 687,193 679,230 641,250 603,239 592,267 593,305 598,342 603,365 612,394 619,418 610,445 600,480 590,520 580,560 572,578 568,605 573,649 578,682 589,717 599,744",
  "606,762 621,792 634,829 641,838 678,845 713,829 753,813 783,793 791,788 817,757 845,747 877,718 877,679 903,641 941,658 950,667 979,688 1010,722 1028,738 1054,749 1080,755",
  // 1.13
  "566,193 572,336 588,418 586,445 578,500 570,560 566,589",
  "566,630 567,640 568,680 572,759 581,782",
  "586,800 591,828 592,868 597,904 603,911 642,914 713,900 753,891 791,873 818,849 832,828 845,794 852,805",
  "872,755 871,748 893,717 903,681 941,695 950,707 966,724 979,737 1003,749 1028,755",
  // corner pieces
  "849,752 852,756",
  "566,166 570,160 576,155",
  "566,179 572,172 578,163 587,155",
  "598,155 597,162 595,193 641,211 661,193 666,162 670,155",
  "990,155 995,161 993,230 1016,269 1054,267 1091,241 1100,224 1113,194 1129,163 1147,155",
  "1003,155 1006,161 1010,230 1016,239 1054,231 1075,193 1091,181 1104,162 1129,157 1134,155",
  "1160,155 1166,161",
  "1166,174 1160,177 1143,193 1159,223 1159,249 1128,374 1101,418 1114,445 1129,465 1140,520 1153,580 1158,640 1158,690 1153,718 1139,740 1120,748 1092,755",
  "1166,188 1163,193 1162,305 1159,364 1155,380 1141,418 1148,445 1154,490 1160,560 1163,640 1162,717 1166,730",
  "1166,742 1153,755",
];

const VALUES: [number, number, string][] = [
  [819, 244, "6.26"],
  [641, 622, "5.24"],
  [621, 663, "4.50"],
  [602, 707, "3.35"],
  [583, 745, "2.25"],
  [566, 782, "1.13"],
];

function Plot() {
  return (
    <svg viewBox="334 109 1065 918" className="h-full w-full" fill="none" role="img" aria-label="Isolines of required reinforcement">
      <g strokeWidth="1" shapeRendering="crispEdges">
        <path d="M565.500 155V980M1165.500 155V755" stroke="#5fdc5f" />
        <path d="M565 154.500H652M1015 154.500H1166M852 754.500H1166M565 979.500H852" stroke="#8ff08f" />
        <path d="M652 154.500H1015M851.500 755V980" stroke="#8c8c8c" />
        <path d="M565.500 605V829" stroke="#000" />
        <path d="M586.500 176.500H1144.500V733.500H830.500V958.500H586.500Z" stroke="#b4b4b4" strokeDasharray="12 4" />
      </g>
      <g stroke="#000" strokeWidth="1.600" strokeLinejoin="round">
        {ISOLINES.map((points) => (
          <polyline key={points} points={points} />
        ))}
      </g>
      <path d="M833 514 824 518H861M852 523l9-4" stroke="#f00" strokeWidth="1.500" />
      {VALUES.map(([x, y, v]) => (
        <g key={v}>
          <rect x={x} y={y} width="35" height="19" fill="#ffff54" />
          <text x={x + 4} y={y + 13} fontSize="12" fontFamily="Liberation Mono, monospace" fill="#000">{v}</text>
        </g>
      ))}
    </svg>
  );
}

/* ---------- status bar ---------- */

const MODES = ["SNAP", "GRID", "CARTES", "OSNAP", "GLINES", "DXF"];

function StatusBar() {
  return (
    <footer className="flex h-[22px] shrink-0 items-center border-t border-[#a5a9b3] bg-linear-to-b from-[#d6dae2] via-[#a8adb6] to-[#b9bdc6] font-['Liberation_Sans',sans-serif] text-[11px] text-[#222]">
      <div className="flex flex-1 justify-end gap-[3px]">
        {MODES.map((m) => (
          <button
            key={m}
            type="button"
            className={clsx(
              "h-[18px] border px-px leading-[16px]",
              m === "GRID" ? "border-t-white border-r-[#888] border-b-[#888] border-l-white" : "border-t-black border-r-white border-b-white border-l-black",
            )}
          >
            {m}
          </button>
        ))}
      </div>
      <span className="w-[191px] pt-[2px] pl-[3px]">Visibility Mode</span>
      <span className="h-4 w-[88px] border-l border-[#8f939b]" />
      <span className="h-4 w-[74px] border-l border-[#8f939b]" />
      <span className="h-4 w-[74px] border-l border-[#8f939b]" />
      <span className="flex h-4 w-[91px] items-end justify-end border-l border-[#8f939b]">
        <svg viewBox="0 0 10 10" className="size-[10px]" fill="#6d7078"><path d="M7 1h2v2H7ZM7 4h2v2H7ZM4 4h2v2H4ZM7 7h2v2H7ZM4 7h2v2H4ZM1 7h2v2H1Z" /></svg>
      </span>
    </footer>
  );
}

export default function App() {
  return (
    <div className="flex h-screen flex-col overflow-hidden border border-[#1883d7] bg-[#cfd3dc] font-['Roboto','Noto_Sans',sans-serif] text-xs">
      <TitleBar />
      <MenuBar />
      <div className="flex shrink-0 pl-px">
        <Bar>
          <Tools items={FILE_BAR} />
          <CaseSelect />
          <Tools items={CASE_BAR} />
        </Bar>
        <Bar>
          <Tools items={EDIT_BAR} />
        </Bar>
        <Bar>
          <Tools items={EXPORT_BAR} />
        </Bar>
      </div>
      <div className="flex shrink-0 pl-px">
        <Bar>
          <Tools items={INSERT_BAR} />
        </Bar>
        <Bar>
          <Tools items={VIEW_BAR} />
        </Bar>
        <Bar>
          <Tools items={RESULT_BAR} />
        </Bar>
      </div>
      <div className="flex min-h-0 flex-1">
        <Navigator />
        <main className="relative ml-[5px] min-w-0 flex-1 border-t-2 border-l-2 border-[#6c6f77] bg-white font-['Liberation_Sans',sans-serif] text-[11px] leading-[14px] text-black">
          <p className="absolute top-[5px] left-1 whitespace-pre-line">
            {"Required Reinforcement a-s,1,+z (bottom) [cm^2/m]\nRF-CONCRETE Surfaces CA1 - Stahlbeton-Bemessung"}
          </p>
          <Plot />
          <p className="absolute bottom-[6px] left-1">Max a-s,1,+z (bottom): 6.83, Min a-s,1,+z (bottom): 0.00 cm^2/m</p>
        </main>
      </div>
      <StatusBar />
    </div>
  );
}
